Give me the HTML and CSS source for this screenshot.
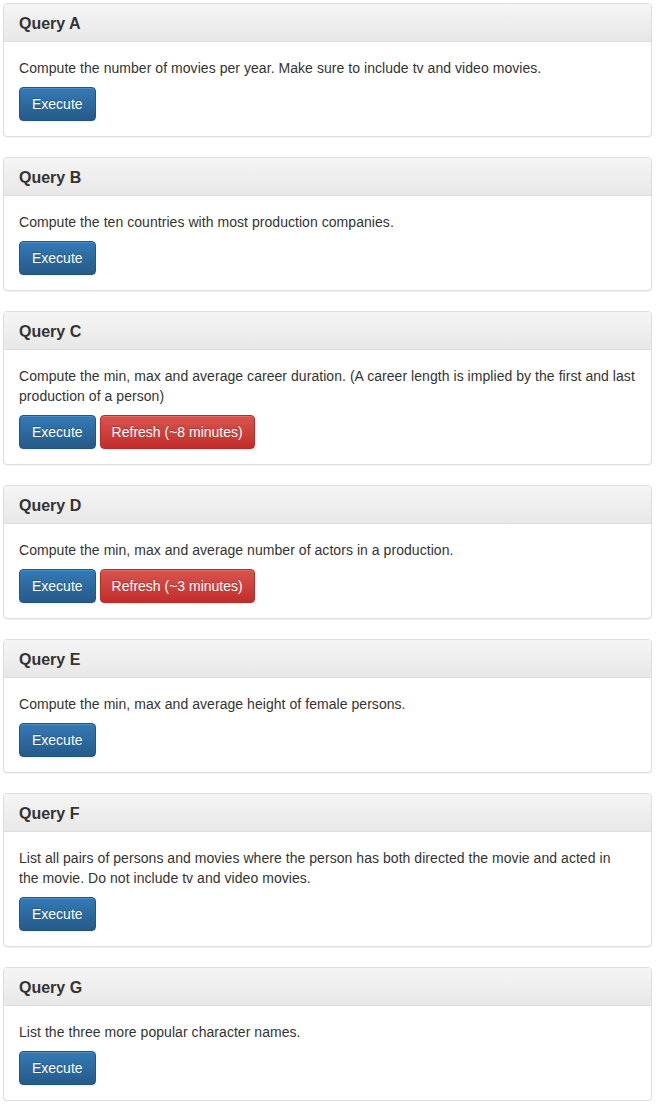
FILE: index.html
```html
<!DOCTYPE html>
<html>
<head>
<meta charset="utf-8">
<link rel="stylesheet" href="styles.css">
</head>
<body>
<div class="page">
  <div class="panel">
    <div class="panel-heading"><h3 class="panel-title">Query A</h3></div>
    <div class="panel-body">
      <p>Compute the number of movies per year. Make sure to include tv and video movies.</p>
      <div class="actions"><button class="btn btn-primary">Execute</button></div>
    </div>
  </div>
  <div class="panel">
    <div class="panel-heading"><h3 class="panel-title">Query B</h3></div>
    <div class="panel-body">
      <p>Compute the ten countries with most production companies.</p>
      <div class="actions"><button class="btn btn-primary">Execute</button></div>
    </div>
  </div>
  <div class="panel">
    <div class="panel-heading"><h3 class="panel-title">Query C</h3></div>
    <div class="panel-body">
      <p>Compute the min, max and average career duration. (A career length is implied by the first and last production of a person)</p>
      <div class="actions"><button class="btn btn-primary">Execute</button><button class="btn btn-danger">Refresh (~8 minutes)</button></div>
    </div>
  </div>
  <div class="panel">
    <div class="panel-heading"><h3 class="panel-title">Query D</h3></div>
    <div class="panel-body">
      <p>Compute the min, max and average number of actors in a production.</p>
      <div class="actions"><button class="btn btn-primary">Execute</button><button class="btn btn-danger">Refresh (~3 minutes)</button></div>
    </div>
  </div>
  <div class="panel">
    <div class="panel-heading"><h3 class="panel-title">Query E</h3></div>
    <div class="panel-body">
      <p>Compute the min, max and average height of female persons.</p>
      <div class="actions"><button class="btn btn-primary">Execute</button></div>
    </div>
  </div>
  <div class="panel">
    <div class="panel-heading"><h3 class="panel-title">Query F</h3></div>
    <div class="panel-body">
      <p>List all pairs of persons and movies where the person has both directed the movie and acted in<br>the movie. Do not include tv and video movies.</p>
      <div class="actions"><button class="btn btn-primary">Execute</button></div>
    </div>
  </div>
  <div class="panel">
    <div class="panel-heading"><h3 class="panel-title">Query G</h3></div>
    <div class="panel-body">
      <p>List the three more popular character names.</p>
      <div class="actions"><button class="btn btn-primary">Execute</button></div>
    </div>
  </div>
</div>
</body>
</html>
```
FILE: styles.css
```css
* { box-sizing: border-box; }
html, body { margin: 0; padding: 0; background: #fff; }
body {
  font-family: "Liberation Sans", Arial, sans-serif;
  font-size: 14px;
  line-height: 20px;
  color: #333;
}
.page {
  padding: 3px 4px 0 3px;
  display: flex;
  flex-direction: column;
  gap: 20px;
}
.panel {
  background: #fff;
  border: 1px solid #ddd;
  border-radius: 4px;
  box-shadow: 0 1px 1px rgba(0,0,0,.05);
}
.panel-heading {
  padding: 11px 15px 9px;
  border-bottom: 1px solid #ddd;
  border-radius: 3px 3px 0 0;
  background: linear-gradient(to bottom, #f5f5f5 0%, #e8e8e8 100%);
}
.panel-title {
  margin: 0;
  font-size: 16px;
  line-height: 17px;
  font-weight: 700;
  color: #333;
}
.panel-body {
  padding: 15px;
}
.panel-body p {
  margin: 0 0 9px;
  padding-top: 1px;
  letter-spacing: 0.05px;
}
.actions {
  display: flex;
  gap: 4px;
}
.btn {
  font-family: "Liberation Sans", Arial, sans-serif;
  font-size: 14px;
  line-height: 20px;
  height: 34px;
  padding: 6px 12px;
  border-radius: 4px;
  border: 1px solid transparent;
  color: #fff;
  text-shadow: 0 -1px 0 rgba(0,0,0,.2);
  box-shadow: inset 0 1px 0 rgba(255,255,255,.15), 0 1px 1px rgba(0,0,0,.075);
  cursor: pointer;
}
.btn-primary {
  background: linear-gradient(to bottom, #337ab7 0%, #265a88 100%);
  border-color: #245580;
}
.btn-danger {
  padding: 6px 11px;
  background: linear-gradient(to bottom, #d9534f 0%, #c12e2a 100%);
  border-color: #b92c28;
}
```
